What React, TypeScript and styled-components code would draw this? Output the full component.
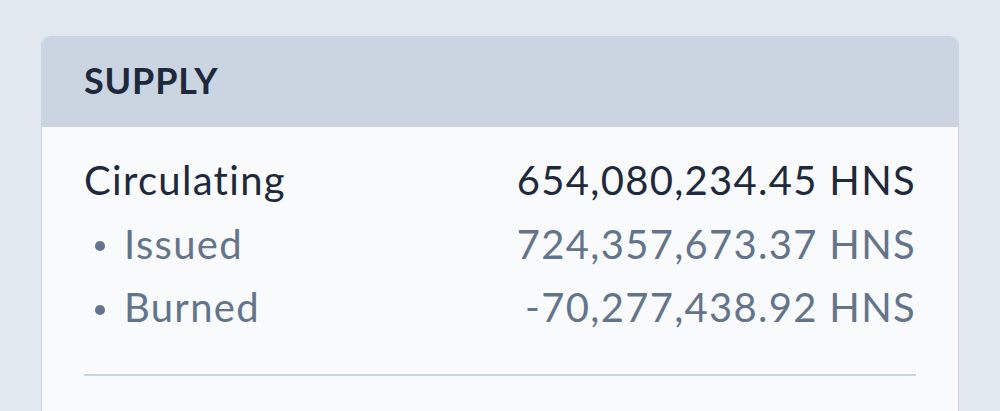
import React from "react";
import styled, { createGlobalStyle } from "styled-components";

const Global = createGlobalStyle`
  html, body { margin: 0; padding: 0; background: #e2e8f0; }
  body { font-family: Lato, "Noto Sans", sans-serif; }
`;

const Page = styled.div`
  padding: 36px 41px 0 41px;
  height: 411px;
  box-sizing: border-box;
  overflow: hidden;
`;

const Card = styled.section`
  border: 1px solid #cbd5e1;
  border-radius: 9px;
  background: #f8fafc;
  overflow: hidden;
  height: 420px;
`;

const Header = styled.header`
  background: #cbd5e1;
  height: 90px;
  box-sizing: border-box;
  padding: 0 42px 4px 42px;
  display: flex;
  align-items: center;
`;

const Title = styled.h2`
  margin: 0;
  font-size: 36px;
  font-weight: 700;
  letter-spacing: 0.8px;
  color: #1e293b;
`;

const Body = styled.div`
  padding: 22px 42px 0 42px;
`;

const Row = styled.div<{ $sub?: boolean }>`
  display: flex;
  justify-content: space-between;
  align-items: baseline;
  font-size: 40px;
  line-height: 63.5px;
  letter-spacing: 1.3px;
  font-variant-ligatures: none;
  color: ${(p) => (p.$sub ? "#64748b" : "#1e293b")};
`;

const Label = styled.span<{ $sub?: boolean }>`
  padding-left: ${(p) => (p.$sub ? "11px" : "0")};
`;

const Dot = styled.span`
  display: inline-block;
  width: 10px;
  height: 10px;
  border-radius: 50%;
  background: #64748b;
  margin-right: 19px;
  vertical-align: middle;
  position: relative;
  top: -2px;
`;

const Divider = styled.hr`
  border: none;
  border-top: 2px solid #cbd5e1;
  margin: 34px 0 0 0;
`;

const rows = [
  { label: "Circulating", value: "654,080,234.45 HNS", sub: false },
  { label: "Issued", value: "724,357,673.37 HNS", sub: true },
  { label: "Burned", value: "-70,277,438.92 HNS", sub: true },
];

export default function App() {
  return (
    <>
      <Global />
      <Page>
        <Card>
          <Header>
            <Title>SUPPLY</Title>
          </Header>
          <Body>
            {rows.map((r) => (
              <Row key={r.label} $sub={r.sub}>
                <Label $sub={r.sub}>
                  {r.sub && <Dot />}
                  {r.label}
                </Label>
                <span>{r.value}</span>
              </Row>
            ))}
            <Divider />
          </Body>
        </Card>
      </Page>
    </>
  );
}
